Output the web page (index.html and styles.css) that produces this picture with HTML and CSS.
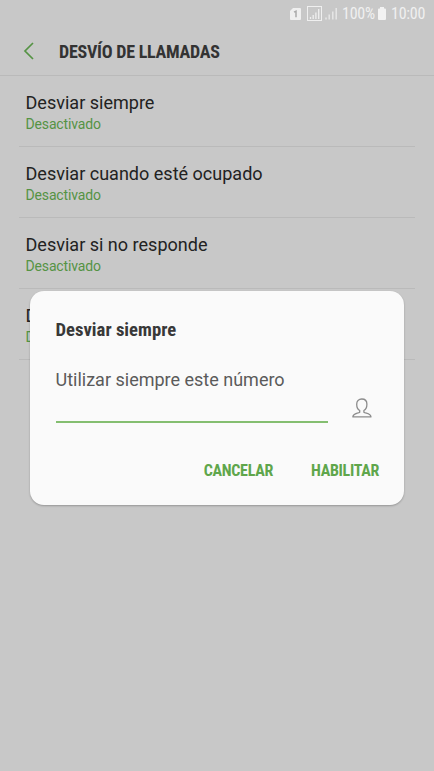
FILE: index.html
```html
<!DOCTYPE html>
<html lang="es">
<head>
    <meta charset="UTF-8">
    <meta name="viewport" content="width=device-width, initial-scale=1.0">
    <title>Desvío de llamadas</title>
    <link rel="stylesheet" href="styles.css">
</head>
<body>

    <div class="status-bar">
        <svg class="sim" width="11" height="12" viewBox="0 0 11 12">
            <path d="M3 0h7a1 1 0 0 1 1 1v10a1 1 0 0 1-1 1H1a1 1 0 0 1-1-1V3z" fill="#efefef"/>
            <path d="M4 4.200l2-1v6" fill="none" stroke="#aaa" stroke-width="1.500"/>
        </svg>
        <svg class="signal-box" width="15" height="15" viewBox="0 0 15 15">
            <rect x=".5" y=".5" width="14" height="14" fill="none" stroke="#efefef"/>
            <path d="M3.500 13v-2M6.200 13V9M8.900 13V6.500M11.700 13V3" stroke="#efefef" stroke-width="1.300"/>
        </svg>
        <svg class="signal" width="13" height="13" viewBox="0 0 13 13">
            <path d="M1 12.500v-2M4.200 12.500v-5M7.800 12.500v-8M11.200 12.500V1" stroke="#e6e6e6" stroke-width="1.500"/>
        </svg>
        <span class="percent">100%</span>
        <svg class="battery" width="8" height="13" viewBox="0 0 8 13">
            <path d="M2 0h4v1.500h1a1 1 0 0 1 1 1V12a1 1 0 0 1-1 1H1a1 1 0 0 1-1-1V2.500a1 1 0 0 1 1-1h1z" fill="#f2f2f2"/>
        </svg>
        <span class="clock">10:00</span>
    </div>

    <div class="header">
        <svg class="back" width="12" height="18" viewBox="0 0 12 18">
            <path d="M10 1L2 9l8 8" fill="none" stroke="#559344" stroke-width="1.700"/>
        </svg>
        <h1><span class="condensed">DESVÍO DE LLAMADAS</span></h1>
    </div>

    <ul class="options">
        <li>
            <p class="name">Desviar siempre</p>
            <p class="state">Desactivado</p>
        </li>
        <li>
            <p class="name">Desviar cuando esté ocupado</p>
            <p class="state">Desactivado</p>
        </li>
        <li>
            <p class="name">Desviar si no responde</p>
            <p class="state">Desactivado</p>
        </li>
        <li>
            <p class="name">D</p>
            <p class="state">D</p>
        </li>
    </ul>

    <div class="dialog">
        <h2><span class="condensed">Desviar siempre</span></h2>
        <p class="label">Utilizar siempre este número</p>
        <div class="field">
            <div class="input"></div>
            <svg class="contact" width="20" height="20" viewBox="0 0 20 20">
                <path d="M7.700 12.500C5.700 11.300 4.700 8.800 4.700 6.200C4.700 3 6.700 1 9.800 1s5.100 2 5.100 5.200c0 2.600-1 5.100-3 6.300v1.700c1.500 1.300 6.600 1.200 7 4.300v.4H.9v-.4c.4-3.100 5.300-3 6.800-4.300z" fill="none" stroke="#8c8c8c" stroke-width="1.300" stroke-linejoin="round"/>
            </svg>
        </div>
        <div class="actions">
            <button class="cancel"><span class="condensed">CANCELAR</span></button>
            <button class="enable"><span class="condensed">HABILITAR</span></button>
        </div>
    </div>

</body>
</html>
```

FILE: styles.css
```css
* {
    box-sizing: border-box;
    margin: 0;
    padding: 0;
}
body {
    height: 771px;
    overflow: hidden;
    background: #c8c8c8;
    font-family: Roboto, "Liberation Sans", sans-serif;
}
.condensed {
    font-family: "Roboto Condensed", Roboto, sans-serif;
    font-stretch: 75%;
    font-weight: bold;
    white-space: nowrap;
}
.status-bar {
    display: flex;
    align-items: center;
    justify-content: flex-end;
    height: 27px;
    padding-right: 9px;
    color: #f0f0f0;
    font-size: 16px;
    font-stretch: 82%;
    letter-spacing: -0.25px;
}
.signal-box {
    margin-left: 6px;
}
.signal {
    margin-left: 3px;
}
.percent {
    width: 33px;
    margin-left: 4px;
    white-space: nowrap;
}
.battery {
    margin: 0 5px 0 3px;
}
.clock {
    width: 34px;
    white-space: nowrap;
}
.header {
    display: flex;
    align-items: center;
    height: 49px;
    padding-left: 23px;
    border-bottom: 1px solid #bababa;
}
.header h1 {
    margin-left: 24px;
    font-size: 18px;
    letter-spacing: -0.25px;
    color: #333;
}
.options {
    list-style: none;
    margin: 0 19px;
}
.options li {
    height: 71px;
    padding: 16px 0 0 6.5px;
    border-bottom: 1px solid #bababa;
}
.name {
    font-size: 18.05px;
    line-height: 22px;
    color: #222;
}
.state {
    font-size: 14px;
    line-height: 20px;
    letter-spacing: -0.15px;
    color: #559344;
}
.dialog {
    position: absolute;
    left: 30px;
    top: 291px;
    width: 374px;
    height: 214px;
    padding: 27px 25px 0 25.5px;
    border-radius: 14px;
    background: #fafafa;
    box-shadow: 0 1px 2px rgba(0, 0, 0, 0.25);
}
.dialog h2 {
    font-size: 18.7px;
    line-height: 24px;
    color: #383838;
}
.label {
    margin-top: 26px;
    font-size: 18px;
    line-height: 24px;
    color: #5a5a5a;
}
.field {
    display: flex;
    justify-content: space-between;
    height: 31px;
    padding-right: 7px;
}
.input {
    width: 272px;
    border-bottom: 2px solid #84be70;
}
.contact {
    margin-top: 6px;
}
.actions {
    display: flex;
    justify-content: flex-end;
    margin-top: 36px;
}
.actions button {
    border: none;
    background: none;
    color: #5fa64b;
    font-size: 16px;
    line-height: 24px;
    letter-spacing: -0.3px;
}
.enable {
    margin-left: 38px;
}
```
